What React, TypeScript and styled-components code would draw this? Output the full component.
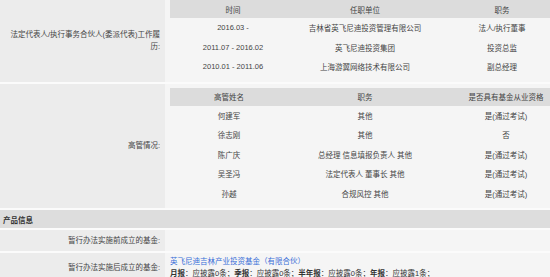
import React from 'react';
import styled, { createGlobalStyle } from 'styled-components';

const GlobalStyle = createGlobalStyle`
  html, body {
    margin: 0;
    padding: 0;
    overflow: hidden;
    background: #f5f5f5;
  }
  body {
    font-family: "Liberation Sans", "Noto Sans CJK SC", sans-serif;
    font-size: 7.5px;
    color: #444;
  }
`;

const history = [
  { time: '2016.03 -', org: '吉林省英飞尼迪投资管理有限公司', job: '法人/执行董事' },
  { time: '2011.07 - 2016.02', org: '英飞尼迪投资集团', job: '投资总监' },
  { time: '2010.01 - 2011.06', org: '上海游翼网络技术有限公司', job: '副总经理' },
];

const managers = [
  { name: '何建军', job: '其他', qual: '是(通过考试)' },
  { name: '徐志刚', job: '其他', qual: '否' },
  { name: '陈广庆', job: '总经理 信息填报负责人 其他', qual: '是(通过考试)' },
  { name: '吴圣冯', job: '法定代表人 董事长 其他', qual: '是(通过考试)' },
  { name: '孙越', job: '合规风控 其他', qual: '是(通过考试)' },
];

const Page = styled.table`
  width: 570px;
  border-collapse: collapse;
  table-layout: fixed;
`;

const Row = styled.tr`
  border-bottom: 2px solid #fbfbfb;
`;

const Label = styled.td`
  width: 155px;
  padding: 0 5px;
  background: #ececec;
  text-align: right;
  vertical-align: middle;
  line-height: 12px;
`;

const Value = styled.td<{ $top?: number; $bottom?: number }>`
  background: #f5f5f5;
  padding: ${(p) => p.$top ?? 4}px 0 ${(p) => p.$bottom ?? 5}px 5px;
  vertical-align: middle;
`;

const SectionTitle = styled.td`
  background: #dddddd;
  height: 18px;
  padding: 0 3px;
  font-weight: bold;
  color: #333;
`;

const Inner = styled.table`
  width: 400px;
  border-collapse: collapse;
  table-layout: fixed;
`;

const Th = styled.th<{ $w: number }>`
  width: ${(p) => p.$w}px;
  height: 18px;
  padding: 0;
  background: #dcdcdc;
  font-weight: normal;
  text-align: center;
`;

const Td = styled.td`
  height: 19.5px;
  padding: 0;
  text-align: center;
`;

const PlainValue = styled.td`
  background: #f5f5f5;
  height: 19px;
`;

const FundCell = styled.td`
  background: #f5f5f5;
  padding: 3px 0 2px 5px;
  line-height: 12px;
  white-space: nowrap;
`;

const FundLink = styled.a`
  display: block;
  color: #3a6fd8;
  text-decoration: none;
`;

const Report = styled.div`
  color: #333;
`;

const Strong = styled.b`
  font-weight: bold;
`;

const App = () => {
  return (
    <>
      <GlobalStyle />
      <Page>
        <tbody>
          <Row>
            <Label>法定代表人/执行事务合伙人(委派代表)工作履历:</Label>
            <Value $top={0}>
              <Inner>
                <thead>
                  <tr>
                    <Th $w={126}>时间</Th>
                    <Th $w={138}>任职单位</Th>
                    <Th $w={136}>职务</Th>
                  </tr>
                </thead>
                <tbody>
                  {history.map((h) => (
                    <tr key={h.time}>
                      <Td>{h.time}</Td>
                      <Td>{h.org}</Td>
                      <Td>{h.job}</Td>
                    </tr>
                  ))}
                </tbody>
              </Inner>
            </Value>
          </Row>
          <Row>
            <Label>高管情况:</Label>
            <Value>
              <Inner>
                <thead>
                  <tr>
                    <Th $w={118}>高管姓名</Th>
                    <Th $w={154}>职务</Th>
                    <Th $w={128}>是否具有基金从业资格</Th>
                  </tr>
                </thead>
                <tbody>
                  {managers.map((m) => (
                    <tr key={m.name}>
                      <Td>{m.name}</Td>
                      <Td>{m.job}</Td>
                      <Td>{m.qual}</Td>
                    </tr>
                  ))}
                </tbody>
              </Inner>
            </Value>
          </Row>
          <Row>
            <SectionTitle colSpan={2}>产品信息</SectionTitle>
          </Row>
          <Row>
            <Label>暂行办法实施前成立的基金:</Label>
            <PlainValue />
          </Row>
          <Row>
            <Label>暂行办法实施后成立的基金:</Label>
            <FundCell>
              <FundLink href="#">英飞尼迪吉林产业投资基金（有限合伙）</FundLink>
              <Report>
                <Strong>月报</Strong>：应披露0条；<Strong>季报</Strong>：应披露0条；<Strong>半年报</Strong>：应披露0条；<Strong>年报</Strong>：应披露1条；
              </Report>
            </FundCell>
          </Row>
        </tbody>
      </Page>
    </>
  );
};

export default App;
